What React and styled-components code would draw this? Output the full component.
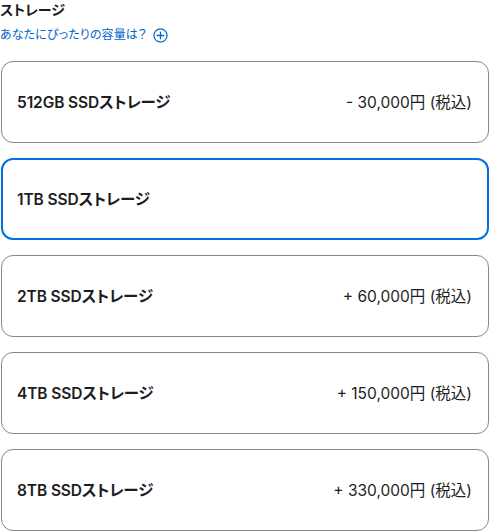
import React from "react";
import styled, { createGlobalStyle } from "styled-components";

const Global = createGlobalStyle`
  html, body { margin: 0; padding: 0; background: #fff; }
  body {
    font-family: "Inter", "Noto Sans CJK JP", sans-serif;
    color: #1d1d1f;
    -webkit-font-smoothing: antialiased;
  }
`;

const Page = styled.div`
  width: 490px;
  padding: 0 1px;
  box-sizing: border-box;
`;

const Header = styled.div`
  display: flex;
  flex-direction: column;
`;

const Title = styled.h2`
  margin: 0;
  margin-left: -1px;
  font-size: 14px;
  line-height: 20px;
  font-weight: 700;
  font-feature-settings: "palt";
`;

const HelpLink = styled.a`
  display: inline-flex;
  align-items: center;
  gap: 6px;
  margin-top: 6px;
  margin-left: -1px;
  font-size: 12px;
  line-height: 18px;
  color: #0066cc;
  text-decoration: none;
  font-feature-settings: "palt";
  letter-spacing: 0.1px;
`;

const List = styled.div`
  display: flex;
  flex-direction: column;
  gap: 15px;
  margin-top: 17px;
`;

const Option = styled.div`
  box-sizing: border-box;
  height: 82px;
  display: flex;
  align-items: center;
  justify-content: space-between;
  padding: 0 ${(p) => (p.$selected ? 15 : 16)}px 2px ${(p) => (p.$selected ? 14 : 15)}px;
  border: ${(p) => (p.$selected ? "2px solid #0071e3" : "1px solid #86868b")};
  border-radius: 12px;
`;

const Label = styled.span`
  font-size: 15.5px;
  font-weight: 600;
  letter-spacing: -0.1px;
  font-feature-settings: "palt";
`;

const Price = styled.span`
  font-size: 15.5px;
  font-weight: 400;
  letter-spacing: 0;
  font-feature-settings: "palt";
`;

const PlusIcon = () => (
  <svg width="15" height="15" viewBox="0 0 15 15" aria-hidden="true">
    <circle cx="7.5" cy="7.5" r="6.6" fill="none" stroke="#0066cc" strokeWidth="1.2" />
    <path d="M7.5 4.2v6.6M4.2 7.5h6.6" stroke="#0066cc" strokeWidth="1.3" strokeLinecap="round" />
  </svg>
);

const options = [
  { label: "512GB SSDストレージ", price: "- 30,000円 (税込)" },
  { label: "1TB SSDストレージ", price: "", selected: true },
  { label: "2TB SSDストレージ", price: "+ 60,000円 (税込)" },
  { label: "4TB SSDストレージ", price: "+ 150,000円 (税込)" },
  { label: "8TB SSDストレージ", price: "+ 330,000円 (税込)" },
];

export default function App() {
  return (
    <>
      <Global />
      <Page>
        <Header>
          <Title>ストレージ</Title>
          <HelpLink href="#">
            あなたにぴったりの容量は？
            <PlusIcon />
          </HelpLink>
        </Header>
        <List>
          {options.map((o) => (
            <Option key={o.label} $selected={o.selected}>
              <Label>{o.label}</Label>
              {o.price && <Price>{o.price}</Price>}
            </Option>
          ))}
        </List>
      </Page>
    </>
  );
}
